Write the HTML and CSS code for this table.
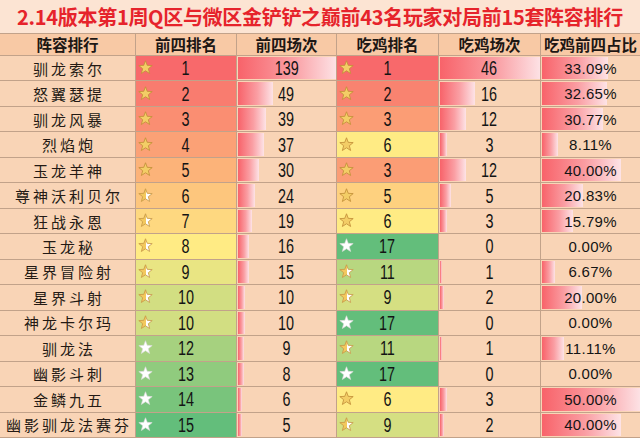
FILE: index.html
```html
<!DOCTYPE html>
<html lang="zh">
<head>
<meta charset="utf-8">
<title>阵容排行</title>
<link rel="stylesheet" href="styles.css">
</head>
<body>
<svg class="defs" width="0" height="0" aria-hidden="true">
  <defs>
    <linearGradient id="halfFill" x1="0" x2="1" y1="0" y2="0">
      <stop offset="50%" stop-color="#f3c85e"/>
      <stop offset="50%" stop-color="#ffffff"/>
    </linearGradient>
    <symbol id="star-full" viewBox="0 0 16 16">
      <polygon points="8,0.8 9.88,5.71 15.13,5.98 11.04,9.29 12.41,14.37 8,11.5 3.59,14.37 4.96,9.29 0.87,5.98 6.12,5.71" fill="#f3cd66" stroke="#c3903a" stroke-width="0.9" stroke-linejoin="round"/>
    </symbol>
    <symbol id="star-half" viewBox="0 0 16 16">
      <polygon points="8,0.8 9.88,5.71 15.13,5.98 11.04,9.29 12.41,14.37 8,11.5 3.59,14.37 4.96,9.29 0.87,5.98 6.12,5.71" fill="url(#halfFill)" stroke="#c99a48" stroke-width="0.9" stroke-linejoin="round"/>
    </symbol>
    <symbol id="star-empty" viewBox="0 0 16 16">
      <polygon points="8,0.8 9.88,5.71 15.13,5.98 11.04,9.29 12.41,14.37 8,11.5 3.59,14.37 4.96,9.29 0.87,5.98 6.12,5.71" fill="#ffffff" stroke="#d9d9d9" stroke-width="0.7" stroke-linejoin="round"/>
    </symbol>
  </defs>
</svg>

<div class="sheet">
  <div class="title">2.14版本第1周Q区与微区金铲铲之巅前43名玩家对局前15套阵容排行</div>

  <div class="hd">阵容排行</div>
  <div class="hd">前四排名</div>
  <div class="hd">前四场次</div>
  <div class="hd">吃鸡排名</div>
  <div class="hd">吃鸡场次</div>
  <div class="hd last">吃鸡前四占比</div>

  <!-- row 1 -->
  <div class="name">驯龙索尔</div>
  <div class="rank r1"><svg class="star"><use href="#star-full"/></svg><span class="num">1</span></div>
  <div class="bc"><span class="bar" style="width:100%"></span><span class="num">139</span></div>
  <div class="rank r1"><svg class="star"><use href="#star-full"/></svg><span class="num">1</span></div>
  <div class="bc"><span class="bar" style="width:100%"></span><span class="num">46</span></div>
  <div class="bc last"><span class="bar" style="width:66.2%"></span><span class="pct">33.09%</span></div>

  <!-- row 2 -->
  <div class="name">怒翼瑟提</div>
  <div class="rank r2"><svg class="star"><use href="#star-full"/></svg><span class="num">2</span></div>
  <div class="bc"><span class="bar" style="width:35.3%"></span><span class="num">49</span></div>
  <div class="rank c2"><svg class="star"><use href="#star-full"/></svg><span class="num">2</span></div>
  <div class="bc"><span class="bar" style="width:34.8%"></span><span class="num">16</span></div>
  <div class="bc last"><span class="bar" style="width:65.3%"></span><span class="pct">32.65%</span></div>

  <!-- row 3 -->
  <div class="name">驯龙风暴</div>
  <div class="rank r3"><svg class="star"><use href="#star-full"/></svg><span class="num">3</span></div>
  <div class="bc"><span class="bar" style="width:28.1%"></span><span class="num">39</span></div>
  <div class="rank c3"><svg class="star"><use href="#star-full"/></svg><span class="num">3</span></div>
  <div class="bc"><span class="bar" style="width:26.1%"></span><span class="num">12</span></div>
  <div class="bc last"><span class="bar" style="width:61.5%"></span><span class="pct">30.77%</span></div>

  <!-- row 4 -->
  <div class="name">烈焰炮</div>
  <div class="rank r4"><svg class="star"><use href="#star-full"/></svg><span class="num">4</span></div>
  <div class="bc"><span class="bar" style="width:26.6%"></span><span class="num">37</span></div>
  <div class="rank c6"><svg class="star"><use href="#star-full"/></svg><span class="num">6</span></div>
  <div class="bc"><span class="bar" style="width:6.5%"></span><span class="num">3</span></div>
  <div class="bc last"><span class="bar" style="width:16.2%"></span><span class="pct">8.11%</span></div>

  <!-- row 5 -->
  <div class="name">玉龙羊神</div>
  <div class="rank r5"><svg class="star"><use href="#star-full"/></svg><span class="num">5</span></div>
  <div class="bc"><span class="bar" style="width:21.6%"></span><span class="num">30</span></div>
  <div class="rank c3"><svg class="star"><use href="#star-full"/></svg><span class="num">3</span></div>
  <div class="bc"><span class="bar" style="width:26.1%"></span><span class="num">12</span></div>
  <div class="bc last"><span class="bar" style="width:80%"></span><span class="pct">40.00%</span></div>

  <!-- row 6 -->
  <div class="name">尊神沃利贝尔</div>
  <div class="rank r6"><svg class="star"><use href="#star-half"/></svg><span class="num">6</span></div>
  <div class="bc"><span class="bar" style="width:17.3%"></span><span class="num">24</span></div>
  <div class="rank c5"><svg class="star"><use href="#star-full"/></svg><span class="num">5</span></div>
  <div class="bc"><span class="bar" style="width:10.9%"></span><span class="num">5</span></div>
  <div class="bc last"><span class="bar" style="width:41.7%"></span><span class="pct">20.83%</span></div>

  <!-- row 7 -->
  <div class="name">狂战永恩</div>
  <div class="rank r7"><svg class="star"><use href="#star-half"/></svg><span class="num">7</span></div>
  <div class="bc"><span class="bar" style="width:13.7%"></span><span class="num">19</span></div>
  <div class="rank c6"><svg class="star"><use href="#star-full"/></svg><span class="num">6</span></div>
  <div class="bc"><span class="bar" style="width:6.5%"></span><span class="num">3</span></div>
  <div class="bc last"><span class="bar" style="width:31.6%"></span><span class="pct">15.79%</span></div>

  <!-- row 8 -->
  <div class="name">玉龙秘</div>
  <div class="rank r8"><svg class="star"><use href="#star-half"/></svg><span class="num">8</span></div>
  <div class="bc"><span class="bar" style="width:11.5%"></span><span class="num">16</span></div>
  <div class="rank c17"><svg class="star"><use href="#star-empty"/></svg><span class="num">17</span></div>
  <div class="bc"><span class="num">0</span></div>
  <div class="bc last"><span class="pct">0.00%</span></div>

  <!-- row 9 -->
  <div class="name">星界冒险射</div>
  <div class="rank r9"><svg class="star"><use href="#star-half"/></svg><span class="num">9</span></div>
  <div class="bc"><span class="bar" style="width:10.8%"></span><span class="num">15</span></div>
  <div class="rank c11"><svg class="star"><use href="#star-half"/></svg><span class="num">11</span></div>
  <div class="bc"><span class="bar" style="width:2.2%"></span><span class="num">1</span></div>
  <div class="bc last"><span class="bar" style="width:13.3%"></span><span class="pct">6.67%</span></div>

  <!-- row 10 -->
  <div class="name">星界斗射</div>
  <div class="rank r10"><svg class="star"><use href="#star-half"/></svg><span class="num">10</span></div>
  <div class="bc"><span class="bar" style="width:7.2%"></span><span class="num">10</span></div>
  <div class="rank c9"><svg class="star"><use href="#star-half"/></svg><span class="num">9</span></div>
  <div class="bc"><span class="bar" style="width:4.3%"></span><span class="num">2</span></div>
  <div class="bc last"><span class="bar" style="width:40%"></span><span class="pct">20.00%</span></div>

  <!-- row 11 -->
  <div class="name">神龙卡尔玛</div>
  <div class="rank r10"><svg class="star"><use href="#star-half"/></svg><span class="num">10</span></div>
  <div class="bc"><span class="bar" style="width:7.2%"></span><span class="num">10</span></div>
  <div class="rank c17"><svg class="star"><use href="#star-empty"/></svg><span class="num">17</span></div>
  <div class="bc"><span class="num">0</span></div>
  <div class="bc last"><span class="pct">0.00%</span></div>

  <!-- row 12 -->
  <div class="name">驯龙法</div>
  <div class="rank r12"><svg class="star"><use href="#star-empty"/></svg><span class="num">12</span></div>
  <div class="bc"><span class="bar" style="width:6.5%"></span><span class="num">9</span></div>
  <div class="rank c11"><svg class="star"><use href="#star-half"/></svg><span class="num">11</span></div>
  <div class="bc"><span class="bar" style="width:2.2%"></span><span class="num">1</span></div>
  <div class="bc last"><span class="bar" style="width:22.2%"></span><span class="pct">11.11%</span></div>

  <!-- row 13 -->
  <div class="name">幽影斗刺</div>
  <div class="rank r13"><svg class="star"><use href="#star-empty"/></svg><span class="num">13</span></div>
  <div class="bc"><span class="bar" style="width:5.8%"></span><span class="num">8</span></div>
  <div class="rank c17"><svg class="star"><use href="#star-empty"/></svg><span class="num">17</span></div>
  <div class="bc"><span class="num">0</span></div>
  <div class="bc last"><span class="pct">0.00%</span></div>

  <!-- row 14 -->
  <div class="name">金鳞九五</div>
  <div class="rank r14"><svg class="star"><use href="#star-empty"/></svg><span class="num">14</span></div>
  <div class="bc"><span class="bar" style="width:4.3%"></span><span class="num">6</span></div>
  <div class="rank c6"><svg class="star"><use href="#star-full"/></svg><span class="num">6</span></div>
  <div class="bc"><span class="bar" style="width:6.5%"></span><span class="num">3</span></div>
  <div class="bc last"><span class="bar" style="width:100%"></span><span class="pct">50.00%</span></div>

  <!-- row 15 -->
  <div class="name">幽影驯龙法赛芬</div>
  <div class="rank r15"><svg class="star"><use href="#star-empty"/></svg><span class="num">15</span></div>
  <div class="bc"><span class="bar" style="width:3.6%"></span><span class="num">5</span></div>
  <div class="rank c9"><svg class="star"><use href="#star-half"/></svg><span class="num">9</span></div>
  <div class="bc"><span class="bar" style="width:4.3%"></span><span class="num">2</span></div>
  <div class="bc last"><span class="bar" style="width:80%"></span><span class="pct">40.00%</span></div>
</div>
</body>
</html>
```

FILE: styles.css
```css
* { box-sizing: border-box; }

html, body {
  margin: 0;
  padding: 0;
  width: 640px;
  height: 438px;
  overflow: hidden;
  background: #f9d4b6;
}

.defs {
  position: absolute;
  width: 0;
  height: 0;
  overflow: hidden;
}

.sheet {
  display: grid;
  grid-template-columns: 136px 101px 100px 102px 102px 99px;
  grid-template-rows: 34px 22px repeat(15, 1fr);
  width: 640px;
  height: 438px;
  font-family: "Noto Sans CJK SC", "Liberation Sans", sans-serif;
  color: #161210;
}

.title {
  grid-column: 1 / -1;
  background: #fce4d3;
  border-bottom: 1px solid #c2a28a;
  display: flex;
  align-items: center;
  justify-content: center;
  font-size: 20px;
  font-weight: 700;
  color: #e6232b;
  letter-spacing: -0.3px;
  white-space: nowrap;
  padding-bottom: 1px;
}

.hd {
  background: #f8c9a5;
  border-right: 1px solid #c2a28a;
  border-bottom: 1px solid #c2a28a;
  display: flex;
  align-items: center;
  justify-content: center;
  font-size: 15.5px;
  font-weight: 700;
  color: #1d1714;
  white-space: nowrap;
  line-height: 1;
}

.name,
.rank,
.bc {
  position: relative;
  border-right: 1px solid #c2a28a;
  border-bottom: 1px solid #c2a28a;
  display: flex;
  align-items: center;
  justify-content: center;
  overflow: hidden;
}

.last { border-right: none; }

.name {
  background: #f9d4b6;
  font-size: 15px;
  letter-spacing: 3px;
  padding-left: 3px;
  color: #241a14;
  white-space: nowrap;
}

.bc { background: #f9d4b6; }

.num {
  position: relative;
  display: inline-block;
  font-family: "Liberation Sans", "DejaVu Sans", sans-serif;
  font-size: 20px;
  line-height: 1;
  transform: scaleX(0.72);
  color: #141414;
}

.pct {
  position: relative;
  font-family: "Liberation Sans", "DejaVu Sans", sans-serif;
  font-size: 15px;
  line-height: 1;
  letter-spacing: 0.3px;
  color: #141414;
}

.bar {
  position: absolute;
  left: 1px;
  top: 1px;
  bottom: 1px;
  background: linear-gradient(to right, #f8636a 0%, #fa9ea3 55%, #fde3e6 100%);
}

.star {
  position: absolute;
  left: 2px;
  top: 50%;
  width: 15px;
  height: 15px;
  margin-top: -8px;
}

/* 前四排名 colour scale (1 → 15) */
.r1 { background: #f8696b; }
.r2 { background: #f97c6f; }
.r3 { background: #fa8e72; }
.r4 { background: #fba176; }
.r5 { background: #fcb379; }
.r6 { background: #fdc67d; }
.r7 { background: #fed880; }
.r8 { background: #ffeb84; }
.r9 { background: #e9e583; }
.r10 { background: #d2de82; }
.r12 { background: #a6d17f; }
.r13 { background: #90cb7e; }
.r14 { background: #79c47c; }
.r15 { background: #63be7b; }

/* 吃鸡排名 colour scale (1 → 17) */
.c2 { background: #f98370; }
.c3 { background: #fb9d75; }
.c5 { background: #fed17f; }
.c6 { background: #ffeb84; }
.c9 { background: #d5df82; }
.c11 { background: #b8d780; }
.c17 { background: #63be7b; }
```
